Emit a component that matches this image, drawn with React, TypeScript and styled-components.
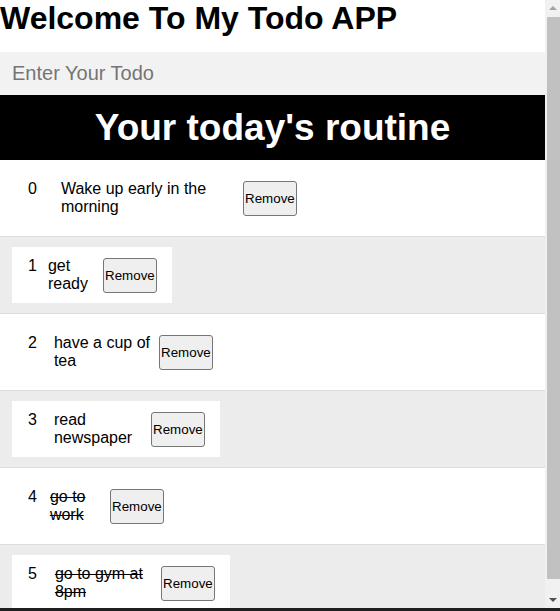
import React from 'react';
import styled, { createGlobalStyle } from 'styled-components';

const Global = createGlobalStyle`
  html, body { margin: 0; padding: 0; background: #ffffff; overflow: hidden; }
  body { font-family: "Liberation Sans", Arial, sans-serif; color: #000; }
  * { box-sizing: border-box; }
`;

const Screen = styled.div`
  display: flex;
  flex-direction: column;
  height: 611px;
`;

const Window = styled.div`
  display: flex;
  height: 608px;
`;

const Viewport = styled.div`
  flex: 1;
  min-width: 0;
  overflow: hidden;
  background: #ffffff;
`;

const ScrollBar = styled.div`
  width: 15px;
  display: flex;
  flex-direction: column;
  background: #f1f1f1;
`;

const ArrowButton = styled.div<{ $down?: boolean }>`
  height: 17px;
  display: flex;
  align-items: center;
  justify-content: center;
  &::after {
    content: '';
    width: 0;
    height: 0;
    border-left: 4px solid transparent;
    border-right: 4px solid transparent;
    ${(p) =>
      p.$down
        ? 'border-top: 4px solid #505050; margin-top: 1px;'
        : 'border-bottom: 4px solid #a3a3a3; margin-bottom: 1px;'}
  }
`;

const Track = styled.div`
  flex: 1;
  display: flex;
  flex-direction: column;
  padding: 0 0 12px 2px;
`;

const Thumb = styled.div`
  flex: 1;
  background: #c1c1c1;
`;

const Page = styled.main`
  display: flex;
  flex-direction: column;
`;

const Title = styled.h1`
  margin: 0 0 15px;
  font-size: 32px;
  line-height: 37px;
  font-weight: bold;
`;

const TodoInput = styled.input`
  display: block;
  width: 100%;
  height: 43px;
  border: none;
  outline: none;
  background: #f2f2f2;
  padding: 0 12px;
  font-family: "Liberation Sans", Arial, sans-serif;
  font-size: 20px;
  color: #000;
  &::placeholder { color: #757575; }
`;

const Banner = styled.h2`
  margin: 0;
  height: 65px;
  line-height: 65px;
  background: #000;
  color: #fff;
  text-align: center;
  font-size: 37px;
  font-weight: bold;
`;

const List = styled.ul`
  list-style: none;
  margin: 0;
  padding: 0;
`;

const Row = styled.li<{ $shade: boolean }>`
  display: flex;
  padding: 10px 12px;
  border-bottom: 1px solid #dddddd;
  background: ${(p) => (p.$shade ? '#ececec' : '#ffffff')};
`;

const Card = styled.div`
  display: flex;
  align-items: center;
  background: #ffffff;
  padding: 10px 15px 10px 16px;
  min-height: 56px;
`;

const Index = styled.span`
  align-self: flex-start;
  font-size: 16px;
  line-height: 18px;
`;

const Text = styled.span<{ $gap: number; $width: number; $done: boolean }>`
  margin-left: ${(p) => p.$gap}px;
  width: ${(p) => p.$width}px;
  font-size: 16px;
  line-height: 18px;
  text-decoration: ${(p) => (p.$done ? 'line-through' : 'none')};
`;

const RemoveButton = styled.button`
  width: 54px;
  height: 35px;
  padding: 0;
  border: 1px solid #767676;
  border-radius: 3px;
  background: #efefef;
  color: #000;
  font-family: "Liberation Sans", Arial, sans-serif;
  font-size: 13.333px;
`;

const BottomEdge = styled.div`
  height: 3px;
  background: #1f1f1f;
`;

const todos = [
  { text: 'Wake up early in the morning', gap: 24, width: 182, done: false },
  { text: 'get ready', gap: 11, width: 55, done: false },
  { text: 'have a cup of tea', gap: 17, width: 105, done: false },
  { text: 'read newspaper', gap: 17, width: 97, done: false },
  { text: 'go to work', gap: 13, width: 60, done: true },
  { text: 'go to gym at 8pm', gap: 18, width: 106, done: true },
];

export default function App() {
  return (
    <>
      <Global />
      <Screen>
        <Window>
          <Viewport>
            <Page>
              <Title>Welcome To My Todo APP</Title>
              <TodoInput placeholder="Enter Your Todo" />
              <Banner>Your today's routine</Banner>
              <List>
                {todos.map((t, i) => (
                  <Row key={i} $shade={i % 2 === 1}>
                    <Card>
                      <Index>{i}</Index>
                      <Text $gap={t.gap} $width={t.width} $done={t.done}>
                        {t.text}
                      </Text>
                      <RemoveButton>Remove</RemoveButton>
                    </Card>
                  </Row>
                ))}
              </List>
            </Page>
          </Viewport>
          <ScrollBar aria-hidden>
            <ArrowButton />
            <Track>
              <Thumb />
            </Track>
            <ArrowButton $down />
          </ScrollBar>
        </Window>
        <BottomEdge />
      </Screen>
    </>
  );
}
